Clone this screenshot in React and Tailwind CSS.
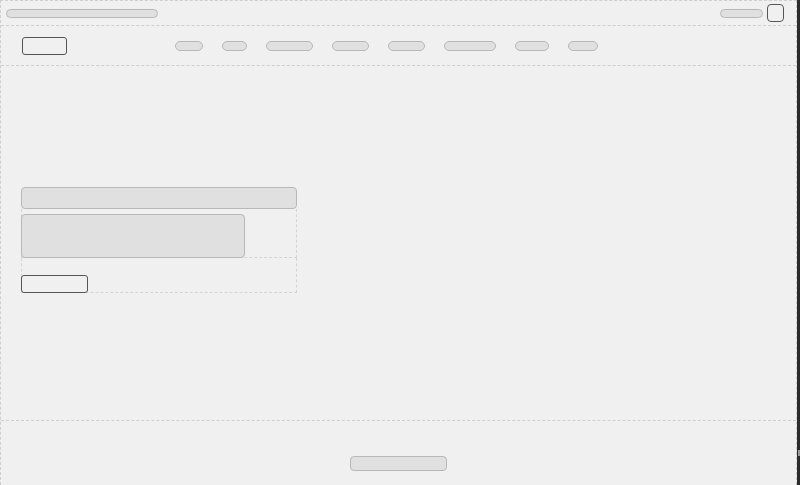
import React from "react";

const navWidths = ["w-[28px]", "w-[25px]", "w-[47px]", "w-[37px]", "w-[37px]", "w-[52px]", "w-[34px]", "w-[30px]"];

function Pill({ className = "" }) {
  return <div className={`rounded-full border border-[#b8b8b8] bg-[#e0e0e0] ${className}`} />;
}

export default function App() {
  return (
    <div className="flex h-[485px] w-[800px] overflow-hidden bg-[#f0f0f0]">
      <div className="flex w-[797px] flex-col border-l border-r border-t border-dashed border-[#cfcfcf]">
        {/* top bar */}
        <div className="flex h-[25px] shrink-0 items-center justify-between border-b border-dashed border-[#cfcfcf] pl-[5px] pr-[12px]">
          <Pill className="h-[9px] w-[152px]" />
          <div className="flex items-center gap-[4px]">
            <Pill className="h-[9px] w-[43px]" />
            <div className="h-[18px] w-[17px] rounded-[4px] border-[1.5px] border-[#555]" />
          </div>
        </div>
        {/* nav */}
        <div className="flex h-[40px] shrink-0 items-center border-b border-dashed border-[#cfcfcf] pl-[21px]">
          <div className="h-[18px] w-[45px] rounded-[3px] border-[1.5px] border-[#555]" />
          <div className="ml-[108px] flex items-center gap-[19px]">
            {navWidths.map((w, i) => (
              <Pill key={i} className={`h-[10px] ${w}`} />
            ))}
          </div>
        </div>
        {/* hero */}
        <div className="h-[354px] shrink-0 pl-[20px] pt-[121px]">
          <div className="flex w-[276px] flex-col">
            <div className="h-[22px] w-full rounded-[4px] border border-[#b8b8b8] bg-[#e0e0e0]" />
            <div className="flex border-b border-l border-r border-dashed border-[#d4d4d4] pt-[5px]">
              <div className="-mb-px -ml-px h-[44px] w-[224px] rounded-[4px] border border-[#b8b8b8] bg-[#e0e0e0]" />
            </div>
            <div className="flex h-[35px] items-end border-b border-l border-r border-dashed border-[#d4d4d4]">
              <div className="-mb-px -ml-px h-[18px] w-[67px] rounded-[3px] border-[1.5px] border-[#555]" />
            </div>
          </div>
        </div>
        {/* footer */}
        <div className="flex h-[65px] shrink-0 justify-center border-t border-dashed border-[#cfcfcf] pt-[35px]">
          <div className="h-[15px] w-[97px] rounded-[4px] border border-[#b8b8b8] bg-[#e0e0e0]" />
        </div>
      </div>
      <div className="relative w-[3px] bg-[#2b2b2b]">
        <div className="absolute left-[1px] top-[450px] h-[6px] w-[2px] bg-[#9a9a9a]" />
      </div>
    </div>
  );
}
